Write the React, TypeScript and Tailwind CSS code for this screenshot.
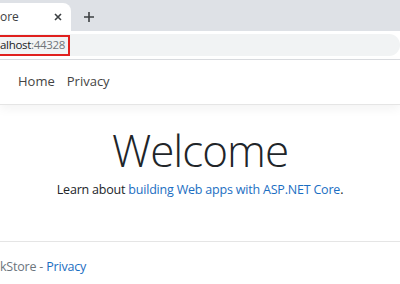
export default function App() {
  return (
    <div className="h-[284px] w-[400px] overflow-hidden bg-white font-['Open_Sans',sans-serif]">
      {/* browser tab strip */}
      <div className="flex h-[31px] items-end bg-[#dee1e6]">
        <div className="flex h-[28px] w-[71px] items-center rounded-tr-lg bg-white">
          <span className="whitespace-nowrap text-[12px] text-[#3c4043]">ore</span>
          <svg className="ml-auto mr-[9px]" width="8" height="8" viewBox="0 0 8 8">
            <path d="M1 1L7 7M7 1L1 7" stroke="#3c4043" strokeWidth="1.6" />
          </svg>
        </div>
        <div className="flex h-[28px] w-[36px] items-center justify-center">
          <svg width="10" height="10" viewBox="0 0 10 10">
            <path d="M5 0V10M0 5H10" stroke="#3c4043" strokeWidth="1.6" />
          </svg>
        </div>
      </div>

      {/* toolbar */}
      <div className="h-[29px] border-b border-[#dadce0] bg-white pt-[3px]">
        <div className="flex h-[22px] items-center rounded-r-full bg-[#f1f3f4]">
          <div className="flex h-[21px] w-[70px] items-center border-2 border-l-0 border-[#e0201e]">
            <span className="whitespace-nowrap text-[11.5px] leading-none tracking-[-0.3px] text-[#202124]">
              alhost<span className="text-[#70757a]">:44328</span>
            </span>
          </div>
        </div>
      </div>

      {/* page */}
      <nav className="flex h-[45px] items-center gap-[12px] border-b border-[#e5e5e5] px-[18px] text-[13px] text-[#444] shadow-[0_4px_10px_rgba(0,0,0,0.05)]">
        <span>Home</span>
        <span>Privacy</span>
      </nav>

      <main className="flex h-[136px] flex-col items-center pt-[17px] text-[#212529]">
        <h1 className="text-[44px] font-light leading-[56px] tracking-[-1px]">Welcome</h1>
        <p className="mt-[3px] text-[12.5px] tracking-[-0.2px]">
          Learn about <span className="text-[#1b6ec2]">building Web apps with ASP.NET Core</span>.
        </p>
      </main>

      <footer className="flex h-[50px] items-center border-t border-[#e5e5e5] pt-[1px] text-[12.5px] tracking-[-0.2px] text-[#6c757d]">
        <span className="whitespace-nowrap">
          kStore - <span className="text-[#1b6ec2]">Privacy</span>
        </span>
      </footer>
    </div>
  );
}
